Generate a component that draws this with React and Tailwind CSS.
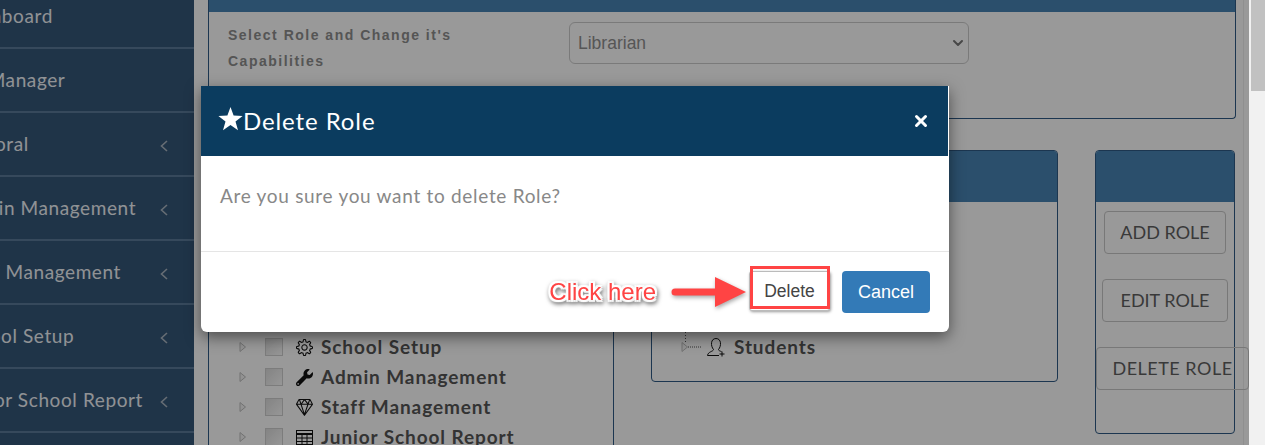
import { ChevronDown, X } from "lucide-react";
import { FaWrench } from "react-icons/fa";
import { SlDiamond, SlSettings } from "react-icons/sl";

const NAV = [
  { label: "Dashboard", chevron: false, offset: "-ml-[43px]" },
  { label: "File Manager", chevron: false, offset: "-ml-[50px]" },
  { label: "Pastoral", chevron: true, offset: "-ml-[43px]" },
  { label: "Admin Management", chevron: true, offset: "-ml-[42px]" },
  { label: "Staff Management", chevron: true, offset: "-ml-[42px]" },
  { label: "School Setup", chevron: true, offset: "-ml-[42px]" },
  { label: "Junior School Report", chevron: true, offset: "-ml-[42px]" },
];

const GridIcon = ({ className }) => (
  <svg width="17" height="15" viewBox="0 0 17 15" fill="none" stroke="currentColor" className={className}>
    <rect x="0.5" y="0.5" width="16" height="14" />
    <path d="M0 4h17" strokeWidth="2" />
    <path d="M0 8h17M0 11.5h17M6 4v11M11 4v11" strokeWidth="1" />
  </svg>
);

const StudentIcon = ({ className }) => (
  <svg width="20" height="20" viewBox="0 0 20 20" fill="none" stroke="currentColor" strokeWidth="1" className={className}>
    <path d="M7.5 12.5 C4.5 9 4.5 1.5 10 1.5 C15.5 1.5 15.5 9 12.5 12.5 C12.5 13.6 14 14 15.5 14.6" />
    <path d="M7.5 12.5 C7.5 14.5 2 14.5 1.5 18.5 H13" />
    <path d="M16 14.5v5M13.5 17h5" />
  </svg>
);

const TREE = [
  { label: "School Setup", Icon: SlSettings },
  { label: "Admin Management", Icon: FaWrench },
  { label: "Staff Management", Icon: SlDiamond },
  { label: "Junior School Report", Icon: GridIcon },
];

const SideItem = ({ item }) => (
  <div className="h-16 shrink-0 border-b-2 border-[#5b7a99] flex items-center justify-between pr-[26px]">
    <span className={`whitespace-nowrap text-[19px] tracking-[0.6px] text-[#f0f4f8] ${item.offset}`}>{item.label}</span>
    {item.chevron && (
      <svg width="8" height="12" viewBox="0 0 8 12" fill="none" stroke="#aab6c2" strokeWidth="1.6" className="mt-[3px]">
        <path d="M7 1 L1.5 6 L7 11" />
      </svg>
    )}
  </div>
);

const Caret = () => (
  <svg width="8" height="12" viewBox="0 0 8 12" fill="#f4f4f4" stroke="#bdbdbd">
    <path d="M1 1.5 L6.5 6 L1 10.5 Z" />
  </svg>
);

const TreeRow = ({ item }) => (
  <div className="h-[30px] flex items-center pl-[30px]">
    <Caret />
    <span className="ml-[18px] w-[18px] h-[18px] shrink-0 border border-[#cfcfcf] bg-linear-to-br from-[#dcdcdc] to-[#fbfbfb]" />
    <span className="ml-[12px] w-[18px] flex justify-center text-[#111]">
      <item.Icon size={17} />
    </span>
    <span className="ml-2 text-[19px] font-bold tracking-[0.9px] text-[#555] whitespace-nowrap">{item.label}</span>
  </div>
);

const RoleButton = ({ children, className }) => (
  <button className={`h-[43px] border border-[#c8c8c8] rounded-[4px] text-[18px] text-[#5f5f5f] whitespace-nowrap shrink-0 ${className}`}>
    {children}
  </button>
);

export default function App() {
  return (
    <div className="relative h-[445px] overflow-hidden flex bg-white font-['Lato',sans-serif]">
      <aside className="w-[194px] shrink-0 bg-[#355778] overflow-hidden flex flex-col -mt-[15px]">
        {NAV.map((item) => (
          <SideItem key={item.label} item={item} />
        ))}
      </aside>

      <main className="flex-1 min-w-0 pl-[14px] pr-[7px] mr-[5px] border-r border-[#eee] flex flex-col">
        <section className="h-[119px] shrink-0 border-x border-b border-[#2f5a85] rounded-b-[4px] flex flex-col">
          <div className="h-3 bg-[#4984b4]" />
          <div className="flex pl-[19px] pt-[10px]">
            <p className="w-[341px] text-[14px] leading-[26px] font-bold tracking-[1.5px] text-[#8e8e8e] font-['Liberation_Sans',sans-serif]">
              Select Role and Change it's
              <br />
              Capabilities
            </p>
            <div className="w-[400px] h-[42px] border border-[#ccc] rounded-[6px] flex items-center justify-between pl-2 pr-[2px] text-[17.5px] text-[#8f8f8f] font-['Liberation_Sans',sans-serif]">
              Librarian
              <ChevronDown size={16} strokeWidth={3} className="text-[#777]" />
            </div>
          </div>
        </section>

        <div className="flex mt-[31px] flex-1 min-h-0">
          <section className="w-[406px] shrink-0 border-x border-[#2f5a85] flex flex-col">
            <div className="h-[52px] bg-[#4984b4] shrink-0" />
            <div className="mt-[130px]">
              {TREE.map((item) => (
                <TreeRow key={item.label} item={item} />
              ))}
            </div>
          </section>

          <section className="ml-[37px] w-[407px] h-[232px] shrink-0 border border-[#2f5a85] rounded-[4px] overflow-hidden flex flex-col">
            <div className="h-[51px] bg-[#4984b4] shrink-0" />
            <div className="mt-[130px] pl-[29px] h-[30px] flex items-center">
              <svg width="26" height="30" viewBox="0 0 26 30" fill="none" className="shrink-0">
                <path d="M4.5 0V10" stroke="#555" strokeDasharray="1 2" />
                <path d="M1 10.5 L6.5 15 L1 19.5 Z" fill="#f4f4f4" stroke="#bdbdbd" />
                <path d="M7 15H21" stroke="#555" strokeDasharray="1 1" />
              </svg>
              <StudentIcon className="-ml-[1px] text-[#111]" />
              <span className="ml-[8px] text-[19px] font-bold tracking-[0.9px] text-[#555]">Students</span>
            </div>
          </section>

          <section className="ml-[37px] w-[140px] h-[284px] shrink-0 border border-[#2f5a85] rounded-[4px] flex flex-col">
            <div className="h-[51px] bg-[#4984b4] shrink-0 rounded-t-[3px]" />
            <div className="flex flex-col pt-[9px] gap-[25px]">
              <RoleButton className="w-[122px] ml-2">ADD ROLE</RoleButton>
              <RoleButton className="w-[126px] ml-[6px]">EDIT ROLE</RoleButton>
              <RoleButton className="w-[153px] tracking-[0.5px]">DELETE ROLE</RoleButton>
            </div>
          </section>
        </div>
      </main>

      <div className="w-4 shrink-0 bg-[#f1f1f1] z-20 pl-[2px]">
        <div className="h-[91px] bg-[#c1c1c1]" />
      </div>

      {/* backdrop stops at the scrollbar */}
      <div className="absolute inset-y-0 left-0 right-4 bg-black/40" />

      <div className="absolute left-[201px] top-[86px] w-[748px] h-[246px] bg-white rounded-b-[6px] shadow-[0_5px_15px_rgba(0,0,0,0.5)] flex flex-col">
        <div className="h-[70px] mr-[1px] bg-[#0b3c5f] flex items-center justify-between pl-[17px] pr-[18px] text-white">
          <h4 className="flex items-center text-[24px] tracking-[0.9px]">
            <svg width="25" height="24" viewBox="0 0 25 24" fill="white" className="mb-[4px]">
              <path d="M12.5 0 L15.6 8.6 L24.6 8.9 L17.5 14.5 L20 23.3 L12.5 18.1 L5 23.3 L7.5 14.5 L0.4 8.9 L9.4 8.6 Z" />
            </svg>
            Delete Role
          </h4>
          <X size={18} strokeWidth={4} />
        </div>
        <div className="h-[96px] border-b border-[#e5e5e5] pl-[19px] pt-[26px] text-[19px] tracking-[0.7px] text-[#888]">
          Are you sure you want to delete Role?
        </div>
        <div className="flex-1 flex items-center justify-end pr-[19px] font-['Liberation_Sans',sans-serif]">
          <span className="text-[24px] text-[#f44] [text-shadow:2px_0_1px_#fff,-2px_0_1px_#fff,0_2px_1px_#fff,0_-2px_1px_#fff,2px_2px_1px_#fff,-2px_2px_1px_#fff,2px_-2px_1px_#fff,-2px_-2px_1px_#fff] drop-shadow-[1px_2px_2px_rgba(0,0,0,0.55)] mr-[14px]">Click here</span>
          <svg width="78" height="32" viewBox="0 0 78 32" className="drop-shadow-[1px_2px_2px_rgba(0,0,0,0.35)] mr-[1px]">
            <path d="M5 12.5 H45 V1 L76 16 L45 31 V19.5 H5 A3.5 3.5 0 0 1 5 12.5 Z" fill="#f44" />
          </svg>
          <button className="relative mb-[2px] w-[81px] h-[40px] border border-[#bbb] rounded-[3px] text-[17.5px] text-[#444] bg-white shadow-[1px_1px_3px_#999]">
            Delete
            <span className="absolute -top-[6px] left-0 w-[80px] h-[43px] border-[3px] border-[#f44]" />
          </button>
          <button className="ml-[12px] w-[88px] h-[42px] bg-[#337ab7] rounded-[4px] text-[18px] text-white">Cancel</button>
        </div>
      </div>
    </div>
  );
}
